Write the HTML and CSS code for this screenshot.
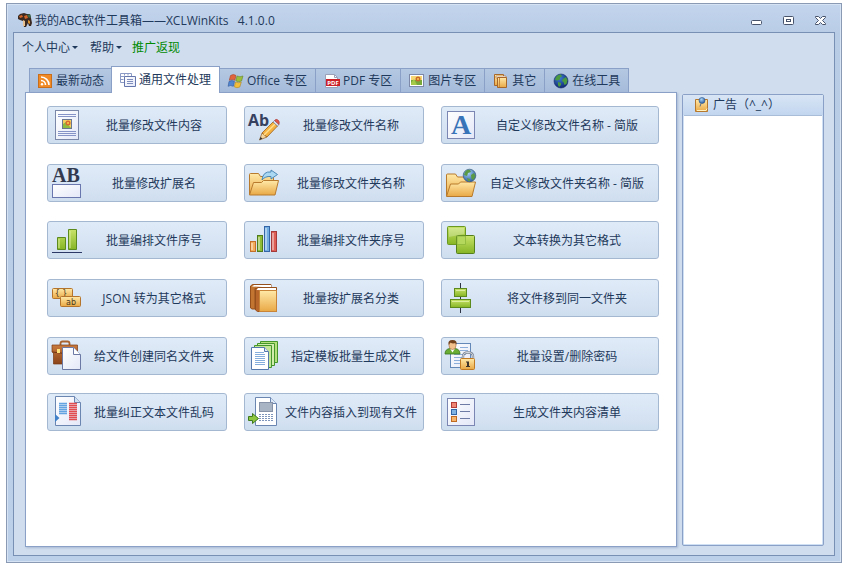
FILE: index.html
```html
<!DOCTYPE html>
<html lang="zh-CN">
<head>
    <meta charset="UTF-8">
    <meta name="viewport" content="width=device-width, initial-scale=1.0">
    <title>我的ABC软件工具箱</title>
    <link rel="stylesheet" href="styles.css">
</head>
<body>
    <!-- Gradients shared by the icons -->
    <svg class="defs" width="0" height="0" aria-hidden="true">
        <defs>
            <linearGradient id="gold" x1="0" y1="0" x2="0" y2="1"><stop offset="0" stop-color="#ffe9a8"/><stop offset="1" stop-color="#e9a845"/></linearGradient>
            <linearGradient id="green" x1="0" y1="0" x2="0" y2="1"><stop offset="0" stop-color="#c8e36a"/><stop offset="1" stop-color="#86b524"/></linearGradient>
            <linearGradient id="paper" x1="0" y1="0" x2="1" y2="1"><stop offset="0" stop-color="#ffffff"/><stop offset="1" stop-color="#e4e8f8"/></linearGradient>
            <linearGradient id="brown" x1="0" y1="0" x2="0" y2="1"><stop offset="0" stop-color="#c97a3c"/><stop offset="1" stop-color="#8a431a"/></linearGradient>
            <radialGradient id="sea" cx="0.4" cy="0.3" r="0.8"><stop offset="0" stop-color="#a9d4f5"/><stop offset="1" stop-color="#1b4f9a"/></radialGradient>
            <radialGradient id="deep" cx="0.4" cy="0.3" r="0.8"><stop offset="0" stop-color="#3d7fd0"/><stop offset="1" stop-color="#0a1d66"/></radialGradient>
        </defs>
    </svg>

    <div class="window">
        <!-- Title bar -->
        <header class="titlebar">
            <svg class="icon" viewBox="0 0 16 16" aria-hidden="true">
                <path d="M1 4l2-2 4-1 3 1 3 0 1 4 1 5-1 3-2 0-1-3-2 4-2 0-1-6-3-1-2-1z" fill="#3a2a22"/>
                <path d="M2 4l3-1 1 2-3 1zM7 4l3-1 1 3-3 1z" fill="#d4662a"/>
                <path d="M6 8l2 1 0 5-2 0z" fill="#e8c391"/>
                <path d="M10 3l3-1 1 3-2 1z" fill="#3b6a4c"/>
                <path d="M11 8l2 1 0 3-2-1z" fill="#d9902f"/>
            </svg>
            <h1>我的ABC软件工具箱——XCLWinKits&nbsp;&nbsp; 4.1.0.0</h1>
            <div class="window-buttons">
                <button type="button" aria-label="最小化"><svg viewBox="0 0 12 12"><rect x="0.5" y="6.5" width="10" height="4" rx="1" fill="#fff" stroke="#46536b"/></svg></button>
                <button type="button" aria-label="最大化"><svg viewBox="0 0 12 12"><rect x="0.5" y="2.5" width="10" height="8" rx="1" fill="#fff" stroke="#46536b"/><rect x="3.5" y="5.5" width="4" height="2" fill="#fff" stroke="#46536b"/></svg></button>
                <button type="button" aria-label="关闭"><svg viewBox="0 0 12 12"><path d="M0.500 2.500h3l2 2 2-2h3v1l-3 3 3 3v1h-3l-2-2-2 2h-3v-1l3-3-3-3z" fill="#fff" stroke="#46536b"/></svg></button>
            </div>
        </header>

        <div class="client">
            <nav class="menu">
                <button type="button">个人中心<span class="arrow"></span></button>
                <button type="button">帮助<span class="arrow"></span></button>
                <a href="#">推广返现</a>
            </nav>

            <div class="workspace">
                <main class="main">
                    <!-- Tabs -->
                    <div class="tabs" role="tablist">
                        <button type="button" class="tab" role="tab">
                            <svg class="icon" viewBox="0 0 16 16"><rect x="1.500" y="1.500" width="13" height="13" fill="#f18a24" stroke="#c96e1a"/><path d="M4 4a8 8 0 0 1 8 8M4 7.500a4.500 4.500 0 0 1 4.500 4.500" fill="none" stroke="#fff" stroke-width="1.600"/><circle cx="5" cy="11.200" r="1.200" fill="#fff"/></svg>
                            最新动态
                        </button>
                        <button type="button" class="tab active" role="tab" aria-selected="true" aria-controls="tools">
                            <svg class="icon" viewBox="0 0 16 16"><path d="M0.500 10.500v-9h11v9zM0.500 4.500h4M0.500 7.500h3M4.500 1.500v2M8 1.500v2" fill="#fff" stroke="#8a9ac4"/><path d="M4.500 4.500h11v10h-11z" fill="url(#paper)" stroke="#6476ac"/><path d="M7 7.500h6M7 9.500h6M7 11.500h6" stroke="#7f8ebd"/></svg>
                            通用文件处理
                        </button>
                        <button type="button" class="tab" role="tab">
                            <svg class="icon" viewBox="0 0 16 16"><path d="M2.500 2.500q3-2 5.500 0l-1.200 4.800q-2.800-1.600-5.500 0z" fill="#e2643c" stroke="#a8432a" stroke-width=".6"/><path d="M9 3q3 1.500 6 0l-1.500 5q-3 1.500-5.700-.2z" fill="#9cbf3a" stroke="#66862a" stroke-width=".6"/><path d="M1 8.500q3-2 5.500 0l-1.200 4.800q-2.800-1.600-5.200 0z" fill="#4f86cf" stroke="#34589a" stroke-width=".6"/><path d="M7.500 9q3 1.500 5.800 0l-1.500 5q-3 1.500-5.500-.2z" fill="#f3bf3b" stroke="#b08620" stroke-width=".6"/></svg>
                            Office 专区
                        </button>
                        <button type="button" class="tab" role="tab">
                            <svg class="icon" viewBox="0 0 16 16"><path d="M1.500 1.500h9l3 3v10h-12z" fill="#fff" stroke="#9aa0b8"/><path d="M10.500 1.500v3h3" fill="none" stroke="#9aa0b8"/><rect x="2" y="6" width="14" height="7" fill="#cb2027"/><text x="9" y="12" text-anchor="middle" class="pdf-text">PDF</text></svg>
                            PDF 专区
                        </button>
                        <button type="button" class="tab" role="tab">
                            <svg class="icon" viewBox="0 0 16 16"><rect x="0.500" y="1.500" width="14" height="12" fill="#fff" stroke="#7d88a8"/><rect x="2" y="3" width="11" height="5" fill="#f6d774"/><rect x="2" y="7" width="11" height="5" fill="#79a83a"/><circle cx="9" cy="6" r="2.500" fill="#c9682a"/><circle cx="9" cy="6" r="1" fill="#fbd24a"/><path d="M2 10l3-4 3 6h-6z" fill="#a6c948"/></svg>
                            图片专区
                        </button>
                        <button type="button" class="tab" role="tab">
                            <svg class="icon" viewBox="0 0 16 16"><path d="M1.500 1.500h9v11h-9z" fill="url(#gold)" stroke="#a8672a"/><path d="M3 3h10v2h-10z" fill="#fff" stroke="#a8672a" stroke-width=".6"/><path d="M4.500 4.500h9v10h-9z" fill="url(#gold)" stroke="#a8672a"/><path d="M6.500 5v9" stroke="#c9873a"/></svg>
                            其它
                        </button>
                        <button type="button" class="tab" role="tab">
                            <svg class="icon" viewBox="0 0 16 16"><circle cx="8" cy="8" r="7" fill="url(#deep)" stroke="#142a66" stroke-width=".6"/><path d="M3 4q2-3 5-2.500l1 2-2 1 0 2-3 1-2-.5zM10 6l3-2 1.500 3-1 4-2 1-1-3-1.500-1zM5 9l3 1 0 2-2 2-1-2z" fill="#4c9a3f"/></svg>
                            在线工具
                        </button>
                    </div>

                    <!-- Tool buttons -->
                    <section class="panel" id="tools" role="tabpanel">
                        <div class="tools">
                            <button type="button" class="tool">
                                <svg viewBox="0 0 32 32"><rect x="4.500" y="1.500" width="23" height="29" fill="url(#paper)" stroke="#7b87a8"/><path d="M7 5.500h18M7 7.500h18M7 22.500h18M7 24.500h18M7 26.500h18" stroke="#8593c6"/><rect x="11.500" y="10.500" width="9" height="9" fill="#f5cf62" stroke="#6a7590"/><path d="M12 19v-4l3-2 5 6z" fill="#8fbb3f"/><circle cx="17" cy="14" r="2.500" fill="#d8692f"/><circle cx="17" cy="14" r="1" fill="#fbd24a"/></svg>
                                <span>批量修改文件内容</span>
                            </button>
                            <button type="button" class="tool">
                                <svg viewBox="0 0 32 32"><text x="0" y="17" class="ab-sans">Ab</text><path d="M11.500 31l2.500-7 5 4z" fill="#f3d5a0" stroke="#8d5a24" stroke-width=".7"/><path d="M11.500 31l1-3 2 1.500z" fill="#333"/><path d="M14 24l11-11 4.500 4-10.500 11z" fill="#f4b13f" stroke="#9a5f1c" stroke-width=".8"/><path d="M16 26l11-11" stroke="#ffdf8e" stroke-width="1.500"/><path d="M25 13l1.500-1.500 4.500 4-1.500 1.500z" fill="#dbe4f3" stroke="#6b7690" stroke-width=".6"/><path d="M26.500 11.500q1.500-2 3.500-.5t1 4.500z" fill="#e2574c" stroke="#a23a3a" stroke-width=".6"/></svg>
                                <span>批量修改文件名称</span>
                            </button>
                            <button type="button" class="tool">
                                <svg viewBox="0 0 32 32"><rect x="2.500" y="2.500" width="27" height="27" fill="url(#paper)" stroke="#7b87b2"/><text x="16" y="25" text-anchor="middle" class="letter-a">A</text></svg>
                                <span>自定义修改文件名称 - 简版</span>
                            </button>

                            <button type="button" class="tool">
                                <svg viewBox="0 0 32 32"><text x="15" y="15" text-anchor="middle" class="ab-serif">AB</text><rect x="1.500" y="17.500" width="28" height="13" fill="url(#paper)" stroke="#6a76ae"/></svg>
                                <span>批量修改扩展名</span>
                            </button>
                            <button type="button" class="tool">
                                <svg viewBox="0 0 32 32"><path d="M1.500 27.500v-20q0-1 1-1h8l2 3h12q1 0 1 1v5" fill="url(#gold)" stroke="#b87a2c"/><path d="M1.500 28l4-12.500h8l2-2h15l-3.500 14.500z" fill="url(#gold)" stroke="#b87a2c"/><path d="M14 13q1-9 9-8v-2l6.500 4.500-6.500 4.500v-2.500q-6-.5-9 3.500z" fill="#aad8f3" stroke="#3f7fb0" stroke-width=".9"/></svg>
                                <span>批量修改文件夹名称</span>
                            </button>
                            <button type="button" class="tool">
                                <svg viewBox="0 0 32 32"><path d="M1.500 29v-21q0-1 1-1h8l2 3h12q1 0 1 1v5" fill="url(#gold)" stroke="#b87a2c"/><path d="M1.500 29.500l4-12.500h8l2-2h15l-3.500 14.500z" fill="url(#gold)" stroke="#b87a2c"/><circle cx="24.500" cy="8.500" r="6.300" fill="url(#sea)" stroke="#3a5d7c" stroke-width=".7"/><path d="M20 5q2-3 5-2l1 2-3 1-1 3-3-1zM26 8l3-2 1.500 3-2 4-2-1zM22 11l3 1 0 2-2 0z" fill="#5c9b45"/></svg>
                                <span>自定义修改文件夹名称 - 简版</span>
                            </button>

                            <button type="button" class="tool">
                                <svg viewBox="0 0 32 32"><path d="M6.500 13.500h8v12h-8zM17.500 5.500h8v20h-8z" fill="url(#green)" stroke="#5c8a1c"/><path d="M8 15v9M19 7v17" stroke="#d9ee9a"/><path d="M1 28.500h30" stroke="#2c3866"/></svg>
                                <span>批量编排文件序号</span>
                            </button>
                            <button type="button" class="tool">
                                <svg viewBox="0 0 32 32"><rect x="2.500" y="17.500" width="5" height="10" fill="#f3ac5c" stroke="#c2702a"/><rect x="9.500" y="11.500" width="5" height="16" fill="#8fbb35" stroke="#4f7c1c"/><rect x="16.500" y="2.500" width="5" height="25" fill="#73aee2" stroke="#3465a6"/><rect x="23.500" y="7.500" width="5" height="20" fill="#de5f55" stroke="#a53a3a"/><path d="M4 19v7M11 13v13M18 4v22M25 9v17" stroke="#fff" stroke-opacity=".55" stroke-width="1.500"/></svg>
                                <span>批量编排文件夹序号</span>
                            </button>
                            <button type="button" class="tool">
                                <svg viewBox="0 0 32 32"><rect x="2.500" y="2.500" width="18" height="18" rx="1" fill="url(#green)" stroke="#6a9820"/><rect x="11.500" y="11.500" width="18" height="18" rx="1" fill="url(#green)" stroke="#547f1a"/><path d="M12 12h8.500v8.500h-8.500z" fill="#b3d85c" stroke="#8db83a" stroke-width=".8"/><path d="M4 4h15v6l-15 3z" fill="#fff" fill-opacity=".25"/></svg>
                                <span>文本转换为其它格式</span>
                            </button>

                            <button type="button" class="tool">
                                <svg viewBox="0 0 32 32"><rect x="1.500" y="6.500" width="20" height="10" rx="1" fill="url(#gold)" stroke="#b5742c"/><text x="10" y="14" text-anchor="middle" class="tag-text">{ }</text><rect x="9.500" y="14.500" width="20" height="10" rx="1" fill="url(#gold)" stroke="#b5742c"/><text x="20" y="23" text-anchor="middle" class="tag-text">ab</text></svg>
                                <span>JSON 转为其它格式</span>
                            </button>
                            <button type="button" class="tool">
                                <svg viewBox="0 0 32 32"><path d="M2.500 4l2-1.500h18.500v4h-16v20.500h-3l-1.500-1z" fill="#c27431" stroke="#96501c"/><path d="M4 4.500l2-1.500h17v2.500z" fill="#fff"/><path d="M7.500 7.500l2-2h19v24h-19l-2-1.500z" fill="#b9662a" stroke="#96501c"/><path d="M8.500 8l1.500-2h18v2.500z" fill="#fff"/><path d="M11.500 8.500h17v21h-17z" fill="url(#gold)" stroke="#c98437"/></svg>
                                <span>批量按扩展名分类</span>
                            </button>
                            <button type="button" class="tool">
                                <svg viewBox="0 0 32 32"><path d="M15.500 1v30" stroke="#2d3544"/><rect x="9.500" y="6.500" width="12" height="8" fill="url(#green)" stroke="#5c8a1c"/><rect x="5.500" y="17.500" width="20" height="8" fill="url(#green)" stroke="#5c8a1c"/><path d="M11 8.500h9M7 19.500h17" stroke="#dcef9f"/></svg>
                                <span>将文件移到同一文件夹</span>
                            </button>

                            <button type="button" class="tool">
                                <svg viewBox="0 0 32 32"><path d="M9.500 5v-1.500q0-2 2-2h5q2 0 2 2v1.500" fill="none" stroke="#a9632e" stroke-width="1.800"/><path d="M1 5h25.500v7l-2 1v11h-22v-11l-1.500-1z" fill="url(#brown)" stroke="#7a3a16" stroke-width=".7"/><path d="M1.500 12q12 3 24.500 0" fill="none" stroke="#6e3312"/><rect x="6" y="9" width="3" height="4" fill="#ffe27a"/><path d="M11.500 7.500h11l7 7v15h-18z" fill="url(#paper)" stroke="#6c79a4"/><path d="M22.500 7.500v7h7" fill="#fff" stroke="#6c79a4"/></svg>
                                <span>给文件创建同名文件夹</span>
                            </button>
                            <button type="button" class="tool">
                                <svg viewBox="0 0 32 32"><path d="M12.500 1.500h17v21h-17z" fill="#b6e07c" stroke="#45962a"/><path d="M9.500 3.500h17v22h-17z" fill="#d2ecae" stroke="#45962a"/><path d="M6.500 5.500h17v22h-17z" fill="#c3e596" stroke="#45962a"/><path d="M3.500 7.500h13l4 4v18h-17z" fill="#fff" stroke="#5578ac"/><path d="M16.500 7.500v4h4" fill="#dfe9f7" stroke="#5578ac"/><path d="M7 12.500h9M7 14.500h10M7 16.500h10M7 18.500h10M7 20.500h10M7 22.500h10M7 24.500h10" stroke="#86aedc"/></svg>
                                <span>指定模板批量生成文件</span>
                            </button>
                            <button type="button" class="tool">
                                <svg viewBox="0 0 32 32"><rect x="5.500" y="3.500" width="20" height="24" fill="url(#paper)" stroke="#6488b8"/><path d="M15 7.500h8M15 10.500h8M9 14.500h12M9 17.500h8M9 20.500h6M9 23.500h6" stroke="#8caedb"/><path d="M0 14q0-5 5-5.500h5q5 .5 5 5.500z" fill="#69ad34" stroke="#39731c" stroke-width=".8"/><path d="M5 8.500l2.500 4 2.500-4z" fill="#fff"/><ellipse cx="7.500" cy="5.500" rx="3.500" ry="4" fill="#f2c08b" stroke="#a26b3d" stroke-width=".6"/><path d="M3.500 5q-1-5 4-5t4 5l-1-2q-3 1-5-.5z" fill="#74431e"/><path d="M18 19v-2.500q0-4 5-4t5 4v2.500" fill="none" stroke="#7d8695" stroke-width="2.400"/><path d="M18 19v-2.500q0-4 5-4t5 4v2.500" fill="none" stroke="#d9dee6" stroke-width="1"/><rect x="15.500" y="18.500" width="14" height="11" rx="1" fill="url(#gold)" stroke="#c17a22"/><path d="M21 21.500h3v4.500h1v1h-4v-1h1v-3.500h-1z" fill="#3d352c"/></svg>
                                <span>批量设置/删除密码</span>
                            </button>

                            <button type="button" class="tool">
                                <svg viewBox="0 0 32 32"><path d="M4.500 0.500h19l6 6v23h-25z" fill="url(#paper)" stroke="#6c86b2"/><path d="M23.500 0.500v6h6" fill="#cfe0f3" stroke="#6c86b2"/><path d="M8 7.500h8M8 9.500h8M8 11.500h8M8 13.500h8M8 15.500h8M8 17.500h8" stroke="#64a4e0" stroke-width="1.300"/><path d="M18 7.500h8M18 9.500h8M18 11.500h8M18 13.500h8M18 15.500h8M18 17.500h8M18 19.500h8M18 21.500h8M18 23.500h8" stroke="#e04c50" stroke-width="1.300"/><path d="M4 18l4.500 4-4.500 4z" fill="#3f80c8"/></svg>
                                <span>批量纠正文本文件乱码</span>
                            </button>
                            <button type="button" class="tool">
                                <svg viewBox="0 0 32 32"><path d="M7.500 1.500h15l6 6v22h-21z" fill="#fff" stroke="#6c86b2"/><path d="M22.500 1.500v6h6" fill="#dce8f6" stroke="#6c86b2"/><rect x="11.500" y="6.500" width="13" height="9" fill="#a8b4c4" stroke="#8592a8"/><path d="M11 18.500h15M11 20.500h15M11 22.500h15M11 24.500h15" stroke="#7f96bc" stroke-dasharray="2 1"/><path d="M0.500 20.500h4v-3l6 5-6 5v-3h-4z" fill="#8fc63f" stroke="#3f7a1c"/></svg>
                                <span>文件内容插入到现有文件</span>
                            </button>
                            <button type="button" class="tool">
                                <svg viewBox="0 0 32 32"><rect x="2.500" y="2.500" width="27" height="27" fill="url(#paper)" stroke="#7b87b2"/><rect x="6.500" y="6.500" width="5" height="5" fill="#ee8573" stroke="#b23c36"/><rect x="6.500" y="13.500" width="5" height="5" fill="#7fb3e2" stroke="#3265a3"/><rect x="6.500" y="20.500" width="5" height="5" fill="#f6b46a" stroke="#bf6a20"/><path d="M15 8.500h10M15 15.500h10M15 22.500h10" stroke="#6e7ba4"/></svg>
                                <span>生成文件夹内容清单</span>
                            </button>
                        </div>
                    </section>
                </main>

                <!-- Ads -->
                <aside class="ads">
                    <h2>
                        <svg class="icon" viewBox="0 0 16 16"><path d="M2.500 2.500h12v12h-12z" fill="url(#gold)" stroke="#b5782c"/><path d="M4 13.500h9l1-2" fill="none" stroke="#fff3c4"/><circle cx="9" cy="3.500" r="3" fill="url(#sea)" stroke="#27508c" stroke-width=".6"/><path d="M8 6.500l-1 3" stroke="#5a6b86"/></svg>
                        广告（^_^）
                    </h2>
                    <div class="ads-body"></div>
                </aside>
            </div>
        </div>
    </div>
</body>
</html>
```

FILE: styles.css
```css
* {
    box-sizing: border-box;
}

body {
    margin: 0;
    padding: 3px 5px 5px 6px;
    min-height: 100vh;
    display: flex;
    background-color: #fff;
    color: #1e395b;
    font-family: "Open Sans", "Noto Sans CJK SC", sans-serif;
    font-size: 12px;
    line-height: 16px;
}

button {
    font: inherit;
    color: inherit;
    margin: 0;
    padding: 0;
    border: 0;
    background: none;
}

svg {
    overflow: visible;
}

.defs {
    position: absolute;
}

.icon {
    width: 16px;
    height: 16px;
    flex: none;
}

/* Window frame */
.window {
    flex: 1;
    display: flex;
    flex-direction: column;
    padding: 0 6px 6px;
    border: 1px solid #8a9ab4;
    background: linear-gradient(#c3d5ed, #b9cce6 30px, #bdd0e9);
    box-shadow: inset 0 0 0 1px #d6e3f4;
}

.titlebar {
    display: flex;
    align-items: center;
    height: 28px;
    padding: 4px 0 0 4px;
}

.titlebar h1 {
    flex: 1;
    margin: 2px 0 0 2px;
    font-size: 12px;
    font-weight: normal;
}

.window-buttons {
    display: flex;
    gap: 20px;
    padding-right: 8px;
}

.window-buttons button,
.window-buttons svg {
    display: block;
    width: 12px;
    height: 12px;
}

/* Client area */
.client {
    flex: 1;
    display: flex;
    flex-direction: column;
    padding: 6px 10px 8px 11px;
    border: 1px solid #7890b4;
    background-color: #cfddee;
}

.menu {
    display: flex;
    align-items: center;
    gap: 12px;
    height: 18px;
    margin-left: -3px;
}

.menu button {
    display: flex;
    align-items: center;
}

.menu a {
    color: #008a00;
    text-decoration: none;
    margin-left: -2px;
}

.arrow {
    margin: 0 0 2px 2px;
    border: 3px solid transparent;
    border-top-color: #1e395b;
    border-bottom: 0;
}

.workspace {
    flex: 1;
    display: flex;
    gap: 5px;
    margin-top: 9px;
}

.main {
    flex: 1;
    display: flex;
    flex-direction: column;
}

/* Tabs */
.tabs {
    display: flex;
    align-items: flex-end;
    padding-left: 4px;
}

.tab {
    display: flex;
    align-items: center;
    gap: 3px;
    height: 24px;
    padding: 0 8px;
    margin-right: -1px;
    border: 1px solid #8ba0c6;
    border-bottom: 0;
    background: linear-gradient(#b4c8e2, #a5bbda);
    white-space: nowrap;
}

.tab:first-child {
    padding: 0 7px;
}

.tab.active {
    position: relative;
    height: 27px;
    margin-bottom: -1px;
    padding-bottom: 1px;
    background: #fff;
}

/* Tool buttons */
.panel {
    flex: 1;
    padding: 13px 17px 13px 21px;
    border: 1px solid #8ba0c6;
    background-color: #fff;
    box-shadow: 1px 1px 2px #a9b9d2;
}

.tools {
    display: grid;
    grid-template-columns: 180fr 180fr 218fr;
    grid-template-rows: 58px 57px 58px 58px 56px 38px;
    column-gap: 17px;
    align-items: start;
}

.tool {
    display: flex;
    align-items: center;
    height: 38px;
    padding: 0 1px 0 3px;
    border: 1px solid #a5b8d2;
    border-radius: 3px;
    background: linear-gradient(#e0ebf8, #cfdeef);
}

.tool svg {
    width: 32px;
    height: 32px;
    flex: none;
}

.tool span {
    flex: 1;
    margin-top: 2px;
    text-align: center;
    white-space: nowrap;
}

/* Lettering inside the icons */
.pdf-text {
    font: bold 6px "Open Sans", sans-serif;
    fill: #fff;
}

.ab-sans {
    font: bold 16px "Open Sans", sans-serif;
    fill: #36405f;
}

.ab-serif {
    font: bold 20px "Liberation Serif", serif;
    fill: #323a50;
}

.letter-a {
    font: bold 28px "Liberation Serif", serif;
    fill: #3a74b8;
}

.tag-text {
    font: 8px "DejaVu Sans", sans-serif;
    fill: #4a3a20;
}

/* Ads */
.ads {
    width: 142px;
    display: flex;
    flex-direction: column;
    margin: 28px 0 1px;
    border: 1px solid #8ba0c6;
    border-radius: 2px;
    background-color: #cfe0f5;
}

.ads h2 {
    display: flex;
    align-items: center;
    gap: 4px;
    height: 20px;
    margin: 0;
    padding-left: 10px;
    font-size: 12px;
    font-weight: normal;
    background: linear-gradient(#d8e5f5, #c2d6ef);
}

.ads-body {
    flex: 1;
    margin: 0 1px 1px;
    border-top: 1px solid #a9bcd8;
    background-color: #fff;
}
```
